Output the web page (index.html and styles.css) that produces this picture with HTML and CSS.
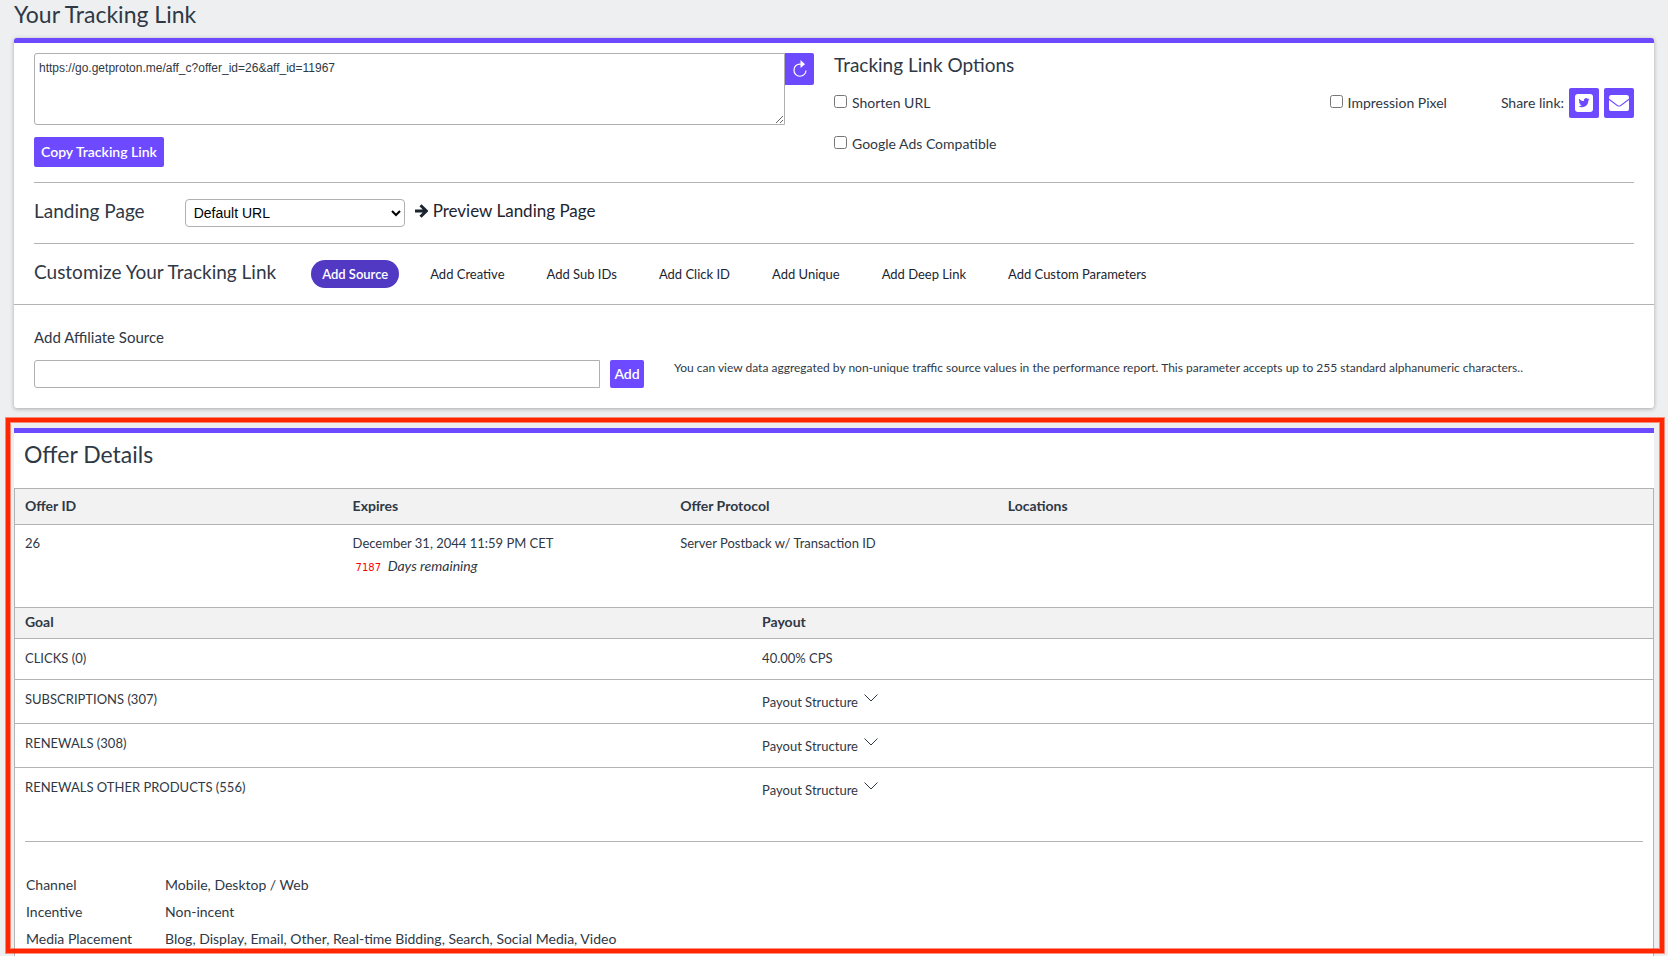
FILE: index.html
```html
<!DOCTYPE html>
<html lang="en">
<head>
    <meta charset="UTF-8">
    <meta name="viewport" content="width=device-width, initial-scale=1.0">
    <title>Your Tracking Link</title>
    <link rel="stylesheet" href="styles.css">
</head>
<body>
    <h1 class="page-title">Your Tracking Link</h1>

    <section class="card">
        <div class="link-row">
            <div class="link-box">
                <div class="link-field">
                    <textarea class="link-text" aria-label="Tracking link">https://go.getproton.me/aff_c?offer_id=26&amp;aff_id=11967</textarea>
                    <button class="btn refresh" type="button" aria-label="Refresh">
                        <svg width="16" height="18" viewBox="0 0 16 18">
                            <path d="M9 4.200C4.800 3.500 2 6.500 2 10A6 6 0 0 0 14 10.500" fill="none" stroke="#fff" stroke-width="1.200"/>
                            <path d="M8.500 0L13 4.200L8.500 8Z" fill="#fff"/>
                        </svg>
                    </button>
                </div>
                <button class="btn copy" type="button">Copy Tracking Link</button>
            </div>
            <div class="options">
                <h2>Tracking Link Options</h2>
                <div class="option-line">
                    <label class="check grow"><input type="checkbox">Shorten URL</label>
                    <label class="check"><input type="checkbox">Impression Pixel</label>
                    <div class="share">
                        <span>Share link:</span>
                        <button class="btn icon" type="button" aria-label="Share on Twitter">
                            <svg width="18" height="18" viewBox="0 0 18 18">
                                <rect width="18" height="18" rx="3" fill="#fff"/>
                                <path d="M14.500 5.300c-.4.200-.8.300-1.300.4.500-.3.800-.7 1-1.200-.4.200-.9.400-1.400.5a2.260 2.260 0 0 0-3.900 2.100C7 7 5.300 6.100 4.200 4.700c-.6 1.100-.3 2.400.7 3-.4 0-.7-.1-1-.3 0 1.100.8 2 1.800 2.300-.3.100-.7.100-1 0 .3.900 1.100 1.500 2.100 1.600-1 .7-2.100 1-3.300.9 1 .7 2.200 1 3.500 1 4.200 0 6.500-3.500 6.300-6.700.5-.3.900-.7 1.200-1.200z" fill="#6d4aff"/>
                            </svg>
                        </button>
                        <button class="btn icon" type="button" aria-label="Share by email">
                            <svg width="20" height="16" viewBox="0 0 20 16">
                                <path d="M0 2.500Q0 0 2 0H18Q20 0 20 2.500V3.500L11.500 9.900Q10 10.900 8.500 9.900L0 3.500Z" fill="#fff"/>
                                <path d="M0 5L8 10.900Q10 12.200 12 10.900L20 5V14Q20 16 18 16H2Q0 16 0 14Z" fill="#fff"/>
                            </svg>
                        </button>
                    </div>
                </div>
                <div class="option-line">
                    <label class="check"><input type="checkbox">Google Ads Compatible</label>
                </div>
            </div>
        </div>

        <div class="row">
            <h2><label for="landing">Landing Page</label></h2>
            <select id="landing" class="landing">
                <option>Default URL</option>
            </select>
            <a class="preview" href="#">
                <svg width="13" height="14" viewBox="0 0 13 14">
                    <path d="M0 7H11M5.500 1.200L11.300 7L5.500 12.800" fill="none" stroke="#1c2430" stroke-width="3"/>
                </svg>
                Preview Landing Page
            </a>
        </div>

        <div class="row customize">
            <h2>Customize Your Tracking Link</h2>
            <nav class="tabs">
                <a class="active" href="#">Add Source</a>
                <a href="#">Add Creative</a>
                <a href="#">Add Sub IDs</a>
                <a href="#">Add Click ID</a>
                <a href="#">Add Unique</a>
                <a href="#">Add Deep Link</a>
                <a href="#">Add Custom Parameters</a>
            </nav>
        </div>

        <div class="source">
            <label for="source">Add Affiliate Source</label>
            <div class="source-line">
                <div class="source-field">
                    <input id="source" type="text">
                    <button class="btn add" type="button">Add</button>
                </div>
                <p>You can view data aggregated by non-unique traffic source values in the performance report. This parameter accepts up to 255 standard alphanumeric characters..</p>
            </div>
        </div>
    </section>

    <section class="offer">
        <h2 class="offer-title">Offer Details</h2>
        <div class="offer-body">
            <table class="facts">
                <thead>
                    <tr><th>Offer ID</th><th>Expires</th><th>Offer Protocol</th><th class="wide">Locations</th></tr>
                </thead>
                <tbody>
                    <tr>
                        <td>26</td>
                        <td>December 31, 2044 11:59 PM CET<div class="remaining"><span>7187</span> <em>Days remaining</em></div></td>
                        <td>Server Postback w/ Transaction ID</td>
                        <td></td>
                    </tr>
                </tbody>
            </table>

            <table class="goals">
                <thead>
                    <tr><th class="goal">Goal</th><th>Payout</th></tr>
                </thead>
                <tbody>
                    <tr><td>CLICKS (0)</td><td>40.00% CPS</td></tr>
                    <tr>
                        <td>SUBSCRIPTIONS (307)</td>
                        <td><button class="structure" type="button">Payout Structure <svg width="14" height="8" viewBox="0 0 14 8"><path d="M0.500 0.500L7 7L13.500 0.500"/></svg></button></td>
                    </tr>
                    <tr>
                        <td>RENEWALS (308)</td>
                        <td><button class="structure" type="button">Payout Structure <svg width="14" height="8" viewBox="0 0 14 8"><path d="M0.500 0.500L7 7L13.500 0.500"/></svg></button></td>
                    </tr>
                    <tr>
                        <td>RENEWALS OTHER PRODUCTS (556)</td>
                        <td><button class="structure" type="button">Payout Structure <svg width="14" height="8" viewBox="0 0 14 8"><path d="M0.500 0.500L7 7L13.500 0.500"/></svg></button></td>
                    </tr>
                </tbody>
            </table>

            <hr>

            <dl class="meta">
                <dt>Channel</dt><dd>Mobile, Desktop / Web</dd>
                <dt>Incentive</dt><dd>Non-incent</dd>
                <dt>Media Placement</dt><dd>Blog, Display, Email, Other, Real-time Bidding, Search, Social Media, Video</dd>
            </dl>
        </div>
        <div class="highlight"></div>
    </section>
</body>
</html>
```

FILE: styles.css
```css
*{box-sizing:border-box;}

body{
  display:flex;
  flex-direction:column;
  min-height:100vh;
  margin:0;
  padding:0 14px;
  background:#edeff1;
  color:#2f3845;
  font:14px/20px Lato, "Open Sans", sans-serif;
}

h1, h2, p, dl, dd{margin:0;}
h1, h2{font-weight:400;}
h2{font-size:19px; line-height:24px;}
a{color:#1c2430; text-decoration:none;}
button{font:inherit; cursor:pointer;}

.page-title{
  padding-bottom:10px;
  font-size:23px;
  line-height:28px;
}

.card{
  background:#fff;
  border-top:5px solid #6d4aff;
  border-radius:3px;
  box-shadow:0 1px 4px rgba(0,0,0,.3);
}

.btn{
  display:flex;
  align-items:center;
  justify-content:center;
  height:30px;
  padding:0;
  border:0;
  border-radius:2px;
  background:#6d4aff;
  color:#fff;
  font-weight:600;
}

.link-row{
  display:grid;
  grid-template-columns:1fr 1fr;
  padding:10px 0 15px;
}
.link-box{padding:0 20px;}
.link-field{display:flex; align-items:flex-start; margin-bottom:12px;}
.link-text{
  flex:1;
  height:72px;
  padding:4px;
  border:1px solid #b0b0b0;
  border-radius:3px 0 0 3px;
  color:#2f3845;
  font:12px/20px "Liberation Sans", Arial, sans-serif;
}
.refresh{width:29px; height:32px; border-radius:0 2px 2px 0;}
.copy{padding:0 7px;}

.options{padding-right:20px;}
.option-line{
  display:flex;
  align-items:center;
  gap:54px;
  min-height:30px;
  margin-top:11px;
}
.check{display:flex; align-items:center; gap:5px;}
.check input{width:13px; height:13px; margin:0 0 3px;}
.grow{flex:1;}
.share{display:flex; align-items:center; gap:5px;}
.icon{width:30px;}

.row{
  display:flex;
  align-items:flex-start;
  margin:0 20px;
  padding:16px 0;
  border:solid #b3b3b3;
  border-width:1px 0;
}
.row h2{margin-right:40px;}
.row.customize{
  margin:0;
  padding:16px 20px;
  border-top:0;
}
.row.customize h2{margin-right:35px;}
.landing{
  width:220px;
  height:28px;
  margin-right:10px;
  padding:0 4px;
  border:1px solid #b0b0b0;
  border-radius:4px;
  background:#fff;
  color:#000;
  font:14px "Liberation Sans", Arial, sans-serif;
}
.preview{display:flex; align-items:center; gap:5px; font-size:17px; line-height:24px;}

.tabs{display:flex; gap:20px; font-size:13px;}
.tabs a{padding:0 11px; border-radius:14px; line-height:28px;}
.tabs .active{background:#5239c4; color:#fff; font-weight:600;}

.source{padding:22px 20px 20px;}
.source label{font-size:15px;}
.source-line{display:flex; margin-top:12px;}
.source-field{display:flex; gap:10px; width:40%; padding-right:30px;}
.source-field input{
  flex:1;
  height:28px;
  border:1px solid #b0b0b0;
  border-radius:3px 0 0 3px;
}
.add{width:34px; height:28px;}
.source-line p{flex:1; font-size:12px; line-height:16px;}

.offer{
  position:relative;
  display:flex;
  flex:1;
  flex-direction:column;
  margin-top:20px;
  border-top:5px solid #6d4aff;
  background:#fff;
}
.offer-title{padding:7px 10px 20px; font-size:23px; line-height:28px;}
.offer-body{flex:1; border:solid #b3b3b3; border-width:1px 1px 0;}

/* marker frame drawn over the whole offer block */
.highlight{
  position:absolute;
  inset:-15px -10px 3px -8px;
  border:4px solid #ff2600;
  box-shadow:0 0 0 1px rgba(255,38,0,.5), inset 0 0 0 1px rgba(255,38,0,.5);
  pointer-events:none;
}

table{width:100%; border-collapse:collapse; table-layout:fixed;}
th, td{padding:0 10px; text-align:left; vertical-align:top;}
th{background:#f2f2f2; font-weight:700;}
td{font-size:13px;}
tr{border-bottom:1px solid #b3b3b3;}

.facts th{height:35px; padding-top:7px;}
.facts .wide{width:40%;}
.facts td{height:83px; padding-top:8px;}
.remaining{padding:3px 3px 0; font-size:14px;}
.remaining span{margin-right:3px; color:#f00; font:10px "DejaVu Sans", sans-serif;}

.goals .goal{width:45%;}
.goals th{height:31px; padding-top:4px;}
.goals td{height:44px; padding-top:9px;}
.goals tbody tr:first-child td{height:41px;}
.goals tbody tr:last-child{border-bottom:0;}
.structure{
  padding:3px 0 0;
  border:0;
  background:none;
  color:inherit;
}
.structure svg{margin-left:3px; vertical-align:5px;}
.structure path{fill:none; stroke:#2f3845;}

hr{
  height:1px;
  margin:29px 10px;
  border:0;
  background:#b3b3b3;
}

.meta{
  display:grid;
  grid-template-columns:139px 1fr;
  padding:0 11px;
  line-height:27px;
}
```
